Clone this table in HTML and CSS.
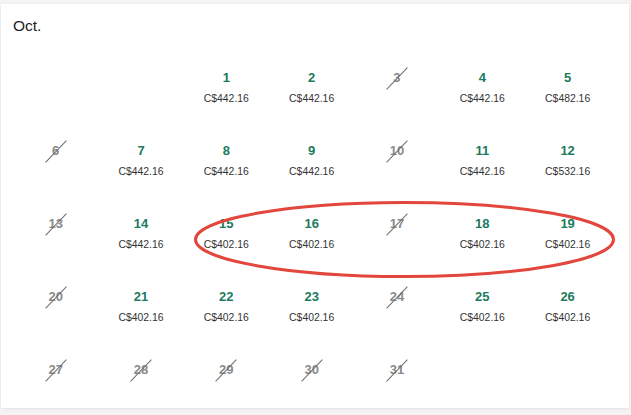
FILE: index.html
```html
<!DOCTYPE html>
<html>
<head>
<meta charset="utf-8">
<link rel="stylesheet" href="styles.css">
</head>
<body>
<div class="card">
  <div class="month">Oct.</div>
  <div class="grid">
    <div class="cell"></div>
    <div class="cell"></div>
    <div class="cell"><span class="day">1</span><span class="price">C$442.16</span></div>
    <div class="cell"><span class="day">2</span><span class="price">C$442.16</span></div>
    <div class="cell"><span class="day off">3</span></div>
    <div class="cell"><span class="day">4</span><span class="price">C$442.16</span></div>
    <div class="cell"><span class="day">5</span><span class="price">C$482.16</span></div>

    <div class="cell"><span class="day off">6</span></div>
    <div class="cell"><span class="day">7</span><span class="price">C$442.16</span></div>
    <div class="cell"><span class="day">8</span><span class="price">C$442.16</span></div>
    <div class="cell"><span class="day">9</span><span class="price">C$442.16</span></div>
    <div class="cell"><span class="day off">10</span></div>
    <div class="cell"><span class="day">11</span><span class="price">C$442.16</span></div>
    <div class="cell"><span class="day">12</span><span class="price">C$532.16</span></div>

    <div class="cell"><span class="day off">13</span></div>
    <div class="cell"><span class="day">14</span><span class="price">C$442.16</span></div>
    <div class="cell"><span class="day">15</span><span class="price">C$402.16</span></div>
    <div class="cell"><span class="day">16</span><span class="price">C$402.16</span></div>
    <div class="cell"><span class="day off">17</span></div>
    <div class="cell"><span class="day">18</span><span class="price">C$402.16</span></div>
    <div class="cell"><span class="day">19</span><span class="price">C$402.16</span></div>

    <div class="cell"><span class="day off">20</span></div>
    <div class="cell"><span class="day">21</span><span class="price">C$402.16</span></div>
    <div class="cell"><span class="day">22</span><span class="price">C$402.16</span></div>
    <div class="cell"><span class="day">23</span><span class="price">C$402.16</span></div>
    <div class="cell"><span class="day off">24</span></div>
    <div class="cell"><span class="day">25</span><span class="price">C$402.16</span></div>
    <div class="cell"><span class="day">26</span><span class="price">C$402.16</span></div>

    <div class="cell"><span class="day off">27</span></div>
    <div class="cell"><span class="day off">28</span></div>
    <div class="cell"><span class="day off">29</span></div>
    <div class="cell"><span class="day off">30</span></div>
    <div class="cell"><span class="day off">31</span></div>
    <div class="cell"></div>
    <div class="cell"></div>
  </div>
  <svg class="circle" width="628" height="404" viewBox="0 0 628 404">
    <ellipse cx="403.5" cy="235.5" rx="209" ry="37" fill="none" stroke="#e2463d" stroke-width="3"/>
  </svg>
</div>
</body>
</html>
```
FILE: styles.css
```css
html, body {
  margin: 0;
  padding: 0;
}
body {
  background: #f4f4f4;
  font-family: "Liberation Sans", Arial, sans-serif;
  padding: 4px 2px 0 1px;
  height: 415px;
  box-sizing: border-box;
}
.card {
  position: relative;
  width: 628px;
  height: 404px;
  box-sizing: border-box;
  background: #fff;
  box-shadow: 0 1px 4px rgba(0, 0, 0, 0.08);
  padding: 12px 0 0 12px;
}
.month {
  font-size: 15.5px;
  line-height: 20px;
  color: #222;
  margin-bottom: 34px;
}
.grid {
  display: grid;
  grid-template-columns: repeat(7, 85.33px);
  grid-auto-rows: 36px;
  row-gap: 37px;
}
.cell {
  display: flex;
  flex-direction: column;
  align-items: center;
  gap: 6px;
}
.day {
  position: relative;
  font-size: 13px;
  line-height: 16px;
  font-weight: bold;
  color: #1c7a60;
}
.day.off {
  color: #8a8a8a;
}
.day.off::after {
  content: "";
  position: absolute;
  left: 50%;
  top: 50%;
  width: 30px;
  height: 1px;
  margin-left: -15px;
  background: #6e6e6e;
  transform: rotate(-46deg);
}
.price {
  font-size: 10.4px;
  line-height: 14px;
  color: #333;
}
.circle {
  position: absolute;
  left: 0;
  top: 0;
  pointer-events: none;
}
```
